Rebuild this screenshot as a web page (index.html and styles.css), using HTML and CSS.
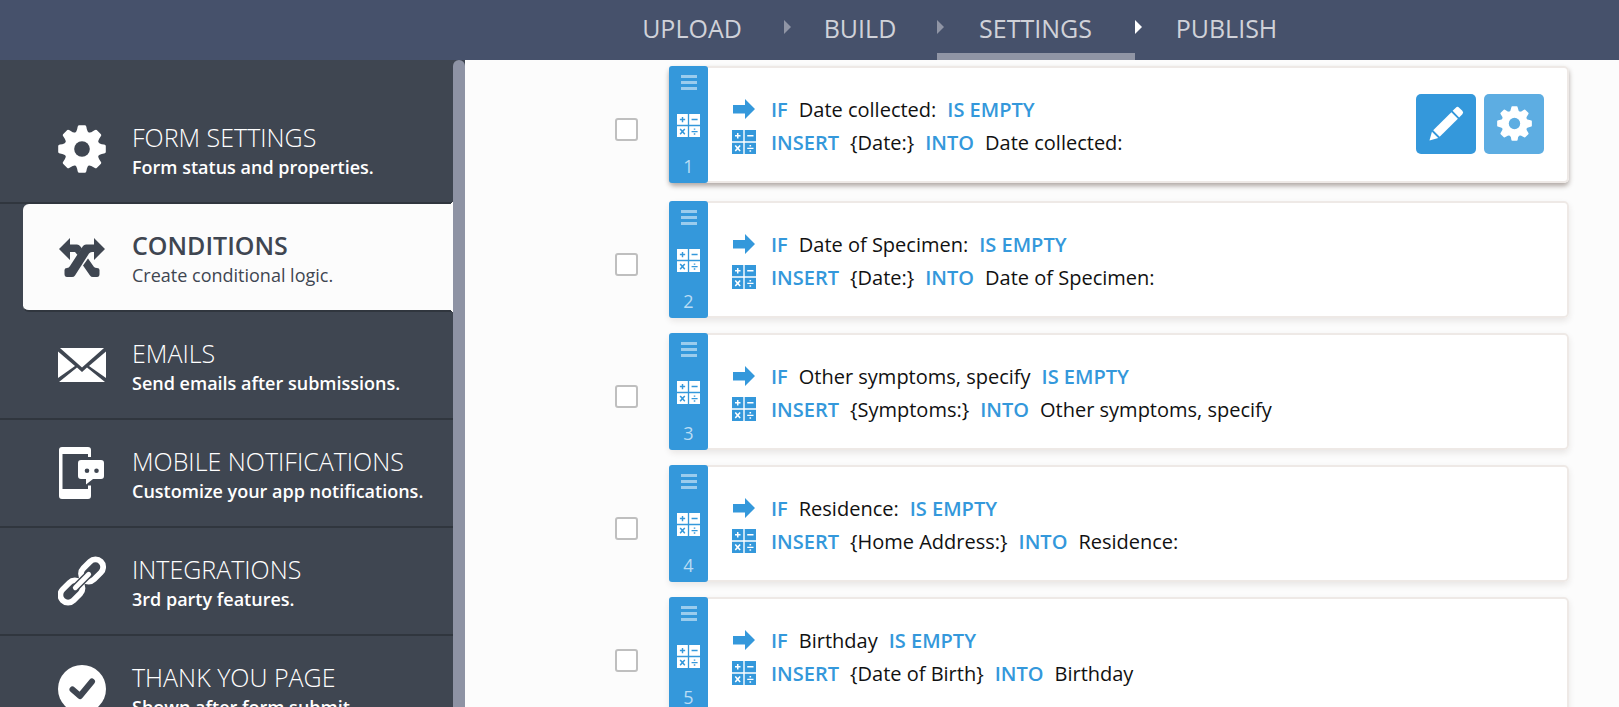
FILE: index.html
```html
<!DOCTYPE html>
<html lang="en">
<head>
<meta charset="utf-8">
<title>Form Settings - Conditions</title>
<link rel="stylesheet" href="styles.css">
</head>
<body>
<svg class="sprite" aria-hidden="true">
  <symbol id="gear" viewBox="-24 -24 48 48">
    <mask id="gear-hole"><rect x="-24" y="-24" width="48" height="48" fill="#fff"/><circle r="7.8" fill="#000"/></mask>
    <g mask="url(#gear-hole)">
      <circle r="17.5"/>
      <g id="teeth"><path id="tooth" d="M-8 -15Q-5 -17 -4.400 -22Q-4.200 -23.800 -3 -23.800H3Q4.200 -23.800 4.400 -22Q5 -17 8 -15V15Q5 17 4.400 22Q4.200 23.800 3 23.800H-3Q-4.200 23.800 -4.400 22Q-5 17 -8 15Z"/>
      <use href="#tooth" transform="rotate(45)"/><use href="#tooth" transform="rotate(90)"/><use href="#tooth" transform="rotate(135)"/></g>
    </g>
  </symbol>
  <symbol id="shuffle" viewBox="0 0 48 40">
    <path d="M1 12 12 1V7.500H19Q21 7.500 22 9L24 11.500 19.500 18 17 15H12V23Z"/>
    <path d="M30 21.500 36 30Q37 31 39 31 41.500 31 41.500 33V37Q41.500 40 39 40H35Q33 40 32 38.500L25 28.500Z"/>
    <path d="M47 12 36 1V7.500H28Q26 7.500 25 9L12 29Q11 31 9 31 6.500 31 6.500 33V37Q6.500 40 9 40H14Q16 40 17 38.500L31 16.500Q32 15 34 15H36V23Z"/>
  </symbol>
  <symbol id="mail" viewBox="0 0 48 34">
    <path d="M2 0H46L24 19.500Z"/><path d="M0 3.500V30L17 18Z"/><path d="M48 3.500V30L31 18Z"/><path d="M19 19.500 24 24 29 19.500 47 34H1Z"/>
  </symbol>
  <symbol id="mobile" viewBox="0 0 46 52">
    <path fill-rule="evenodd" d="M3 0H29Q32 0 32 3V10H29V7H3.500V42H29V38.500H32V49Q32 52 29 52H3Q0 52 0 49V3Q0 0 3 0Z"/>
    <path fill-rule="evenodd" d="M22 13H42Q45 13 45 16V29Q45 32 42 32H34L27 37.500V32H22Q19 32 19 29V16Q19 13 22 13ZM28 21.500A2.300 2.300 0 1 0 28 26.100 2.300 2.300 0 1 0 28 21.500ZM37.500 21.500A2.300 2.300 0 1 0 37.500 26.100 2.300 2.300 0 1 0 37.500 21.500Z"/>
  </symbol>
  <symbol id="link" viewBox="0 0 50 50">
    <g fill="none" stroke="currentColor" stroke-width="6">
      <rect x="-13" y="-8" width="26" height="16" rx="8" transform="translate(35.500 14) rotate(-45)"/>
      <rect x="-13" y="-8" width="26" height="16" rx="8" transform="translate(14 36) rotate(-45)"/>
    </g>
    <path class="link-gap" d="M18 32 32 18"/><path class="link-bar" d="M18 32 32 18"/>
  </symbol>
  <symbol id="done" viewBox="0 0 48 48">
    <circle cx="24" cy="24" r="24"/><path class="done-tick" d="M14.500 24.500 22 31 34 16.500"/>
  </symbol>
  <symbol id="calc" viewBox="0 0 24 24">
    <path fill-rule="evenodd" d="M0 0H11.300V11.300H0ZM5 3V5H3V6.500H5V8.500H6.500V6.500H8.500V5H6.500V3Z"/>
    <path fill-rule="evenodd" d="M12.700 0H24V11.300H12.700ZM15.200 5V6.500H21.500V5Z"/>
    <path fill-rule="evenodd" d="M0 12.700H11.300V24H0ZM3.800 15 2.700 16.100 4.600 18.300 2.700 20.500 3.800 21.600 5.700 19.600 7.600 21.600 8.700 20.500 6.800 18.300 8.700 16.100 7.600 15 5.700 17Z"/>
    <path fill-rule="evenodd" d="M12.700 12.700H24V24H12.700ZM15.200 17.700V19H21.500V17.700ZM17.500 15V16.500H19.100V15ZM17.500 20.200V21.700H19.100V20.200Z"/>
  </symbol>
  <symbol id="arrow" viewBox="0 0 22 20"><path d="M0 6H12V0L22 10 12 20V14.500H0Z"/></symbol>
  <symbol id="pencil" viewBox="0 0 36 36">
    <path d="M.500 35.500 3 26.500 9.500 33Z"/><path d="M4.300 25 23 6.300 29.700 13 11 31.700Z"/><path d="M24.300 5 27.600 1.700Q29.300 0 31 1.700L34.300 5Q36 6.700 34.300 8.400L31 11.700Z"/>
  </symbol>
</svg>

<header class="topbar">
  <nav class="steps" aria-label="Form steps">
    <a class="step" href="#">UPLOAD</a>
    <a class="step" href="#">BUILD</a>
    <a class="step current" href="#" aria-current="page">SETTINGS</a>
    <a class="step" href="#">PUBLISH</a>
  </nav>
</header>

<div class="layout">
  <aside class="sidebar">
    <nav class="menu" aria-label="Settings">
      <a class="item" href="#"><svg class="item-icon" fill="currentColor"><use href="#gear"/></svg><span class="label"><span class="title">FORM SETTINGS</span><span class="note">Form status and properties.</span></span></a>
      <a class="item active" href="#"><svg class="item-icon" fill="currentColor"><use href="#shuffle"/></svg><span class="label"><span class="title">CONDITIONS</span><span class="note">Create conditional logic.</span></span></a>
      <a class="item" href="#"><svg class="item-icon" fill="currentColor"><use href="#mail"/></svg><span class="label"><span class="title">EMAILS</span><span class="note">Send emails after submissions.</span></span></a>
      <a class="item" href="#"><svg class="item-icon" fill="currentColor"><use href="#mobile"/></svg><span class="label"><span class="title">MOBILE NOTIFICATIONS</span><span class="note">Customize your app notifications.</span></span></a>
      <a class="item" href="#"><svg class="item-icon" fill="currentColor"><use href="#link"/></svg><span class="label"><span class="title">INTEGRATIONS</span><span class="note">3rd party features.</span></span></a>
      <a class="item" href="#"><svg class="item-icon" fill="currentColor"><use href="#done"/></svg><span class="label"><span class="title">THANK YOU PAGE</span><span class="note">Shown after form submit.</span></span></a>
    </nav>
    <div class="scrollbar"></div>
  </aside>

  <main class="conditions">
    <div class="row">
      <input class="pick" type="checkbox" aria-label="Select condition 1">
      <article class="card hovered">
        <div class="handle"><span class="grip"></span><svg class="kind"><use href="#calc"/></svg><span>1</span></div>
        <div class="rules">
          <p class="rule"><svg class="mark arrow"><use href="#arrow"/></svg><b>IF</b><span>Date collected:</span><b>IS EMPTY</b></p>
          <p class="rule"><svg class="mark"><use href="#calc"/></svg><b>INSERT</b><span>{Date:}</span><b>INTO</b><span>Date collected:</span></p>
        </div>
        <div class="actions">
          <button class="action" aria-label="Edit"><svg class="pencil"><use href="#pencil"/></svg></button>
          <button class="action light" aria-label="Options"><svg class="cog"><use href="#gear"/></svg></button>
        </div>
      </article>
    </div>
    <div class="row">
      <input class="pick" type="checkbox" aria-label="Select condition 2">
      <article class="card">
        <div class="handle"><span class="grip"></span><svg class="kind"><use href="#calc"/></svg><span>2</span></div>
        <div class="rules">
          <p class="rule"><svg class="mark arrow"><use href="#arrow"/></svg><b>IF</b><span>Date of Specimen:</span><b>IS EMPTY</b></p>
          <p class="rule"><svg class="mark"><use href="#calc"/></svg><b>INSERT</b><span>{Date:}</span><b>INTO</b><span>Date of Specimen:</span></p>
        </div>
      </article>
    </div>
    <div class="row">
      <input class="pick" type="checkbox" aria-label="Select condition 3">
      <article class="card">
        <div class="handle"><span class="grip"></span><svg class="kind"><use href="#calc"/></svg><span>3</span></div>
        <div class="rules">
          <p class="rule"><svg class="mark arrow"><use href="#arrow"/></svg><b>IF</b><span>Other symptoms, specify</span><b>IS EMPTY</b></p>
          <p class="rule"><svg class="mark"><use href="#calc"/></svg><b>INSERT</b><span>{Symptoms:}</span><b>INTO</b><span>Other symptoms, specify</span></p>
        </div>
      </article>
    </div>
    <div class="row">
      <input class="pick" type="checkbox" aria-label="Select condition 4">
      <article class="card">
        <div class="handle"><span class="grip"></span><svg class="kind"><use href="#calc"/></svg><span>4</span></div>
        <div class="rules">
          <p class="rule"><svg class="mark arrow"><use href="#arrow"/></svg><b>IF</b><span>Residence:</span><b>IS EMPTY</b></p>
          <p class="rule"><svg class="mark"><use href="#calc"/></svg><b>INSERT</b><span>{Home Address:}</span><b>INTO</b><span>Residence:</span></p>
        </div>
      </article>
    </div>
    <div class="row">
      <input class="pick" type="checkbox" aria-label="Select condition 5">
      <article class="card">
        <div class="handle"><span class="grip"></span><svg class="kind"><use href="#calc"/></svg><span>5</span></div>
        <div class="rules">
          <p class="rule"><svg class="mark arrow"><use href="#arrow"/></svg><b>IF</b><span>Birthday</span><b>IS EMPTY</b></p>
          <p class="rule"><svg class="mark"><use href="#calc"/></svg><b>INSERT</b><span>{Date of Birth}</span><b>INTO</b><span>Birthday</span></p>
        </div>
      </article>
    </div>
  </main>
</div>
</body>
</html>
```
FILE: styles.css
```css
* { box-sizing: border-box; }
body {
  margin: 0;
  height: 100vh;
  display: flex;
  flex-direction: column;
  overflow: hidden;
  background: #fcfcfc;
  font-family: "Open Sans", "Noto Sans", sans-serif;
  color: #111;
}
.sprite { position: absolute; width: 0; height: 0; }
a { color: inherit; text-decoration: none; }

.topbar {
  flex: none;
  display: flex;
  justify-content: center;
  padding-left: 300px;
  background: #46516b;
}
.steps { display: grid; grid-template-columns: 183px 153px 198px 184px; }
.step {
  position: relative;
  height: 60px;
  border-bottom: 7px solid transparent;
  color: #d0d2d9;
  font-size: 25px;
  line-height: 56px;
  text-align: center;
}
.step.current { border-color: #9095a5; }
.step + .step::before {
  content: "";
  position: absolute;
  left: 0;
  top: 20px;
  border: solid transparent;
  border-width: 7px 0 7px 7px;
  border-left-color: #9095a5;
}
.step.current + .step::before { border-left-color: #fff; }

.layout { flex: 1; min-height: 0; display: flex; }
.sidebar {
  flex: none;
  width: 465px;
  display: flex;
  overflow: hidden;
  background: #3f4651;
  color: #fff;
}
.menu { flex: 1; padding-top: 36px; }
.scrollbar { width: 12px; background: #8e93a4; border-radius: 6px 6px 0 0; }
.item {
  height: 108px;
  display: flex;
  align-items: center;
  gap: 26px;
  padding-left: 58px;
  border-bottom: 2px solid #30363e;
}
.item-icon { width: 48px; height: 52px; flex: none; }
.label { display: flex; flex-direction: column; padding-top: 6px; }
.title { font-size: 25px; font-weight: 300; line-height: 30px; }
.note { font-size: 18px; font-weight: 600; line-height: 30px; white-space: nowrap; }
.item.active {
  position: relative;
  margin-left: 23px;
  padding-left: 35px;
  border-radius: 6px 0 0 6px;
  background: #fcfcfc;
  color: #3f4651;
}
.item.active::before,
.item.active::after {
  content: "";
  position: absolute;
  right: 0;
  width: 4px;
  height: 4px;
}
.item.active::before {
  bottom: 100%;
  background: radial-gradient(circle at 0 0, transparent 4px, #fcfcfc 4px);
}
.item.active::after {
  top: 100%;
  background: radial-gradient(circle at 0 100%, transparent 4px, #fcfcfc 4px);
}
.active .title { font-weight: 600; }
.active .note { font-weight: 400; }
.link-gap, .link-bar { fill: none; stroke-linecap: round; }
.link-gap { stroke: #3f4651; stroke-width: 8px; }
.link-bar { stroke: #fff; stroke-width: 5px; }
.done-tick {
  fill: none;
  stroke: #3f4651;
  stroke-width: 6px;
  stroke-linecap: round;
  stroke-linejoin: round;
}

.conditions {
  flex: 1;
  min-width: 0;
  padding: 6px 50px 0 150px;
  overflow: hidden;
}
.row { display: flex; align-items: center; gap: 31px; margin-bottom: 15px; }
.row:first-child { margin-bottom: 18px; }
.pick {
  appearance: none;
  flex: none;
  width: 23px;
  height: 23px;
  margin: 10px 0 0;
  border: 2px solid #bfbfbf;
  border-radius: 3px;
  background: #fff;
}
.card {
  flex: 1;
  min-height: 117px;
  display: flex;
  align-items: center;
  border-radius: 5px;
  background: #fff;
  box-shadow: inset 0 0 0 2px #eee9e6, 0 3px 6px rgba(60, 40, 30, .1);
}
.card.hovered { box-shadow: inset 0 0 0 2px #eee9e6, 0 3px 5px rgba(60, 40, 30, .4); }
.handle {
  align-self: stretch;
  width: 39px;
  display: flex;
  flex-direction: column;
  align-items: center;
  justify-content: space-between;
  padding: 9px 0 5px;
  border-radius: 3px;
  background: #3498db;
  color: #b9dcf4;
  font-size: 18px;
  line-height: 24px;
}
.grip {
  width: 16px;
  height: 15px;
  border: solid #9acced;
  border-width: 3px 0;
  background: linear-gradient(#9acced, #9acced) center / 100% 3px no-repeat;
}
.kind { width: 23px; height: 23px; fill: #fff; margin-top: 6px; }
.rules { flex: 1; padding: 2px 0 0 24px; }
.rule {
  display: flex;
  align-items: center;
  gap: 11px;
  margin: 0;
  font-size: 20px;
  line-height: 33px;
}
.rule b { color: #3498db; font-weight: 600; }
.mark { width: 24px; height: 24px; margin-right: 4px; fill: #3498db; }
.mark.arrow { height: 20px; }
.actions { display: flex; gap: 8px; padding: 0 25px 2px 0; }
.action {
  width: 60px;
  height: 60px;
  display: grid;
  place-items: center;
  padding: 0;
  border: 0;
  border-radius: 5px;
  background: #3498db;
  fill: #fff;
}
.action.light { background: #5dade2; }
.pencil { width: 35px; height: 35px; }
.cog { width: 35px; height: 35px; }
```
